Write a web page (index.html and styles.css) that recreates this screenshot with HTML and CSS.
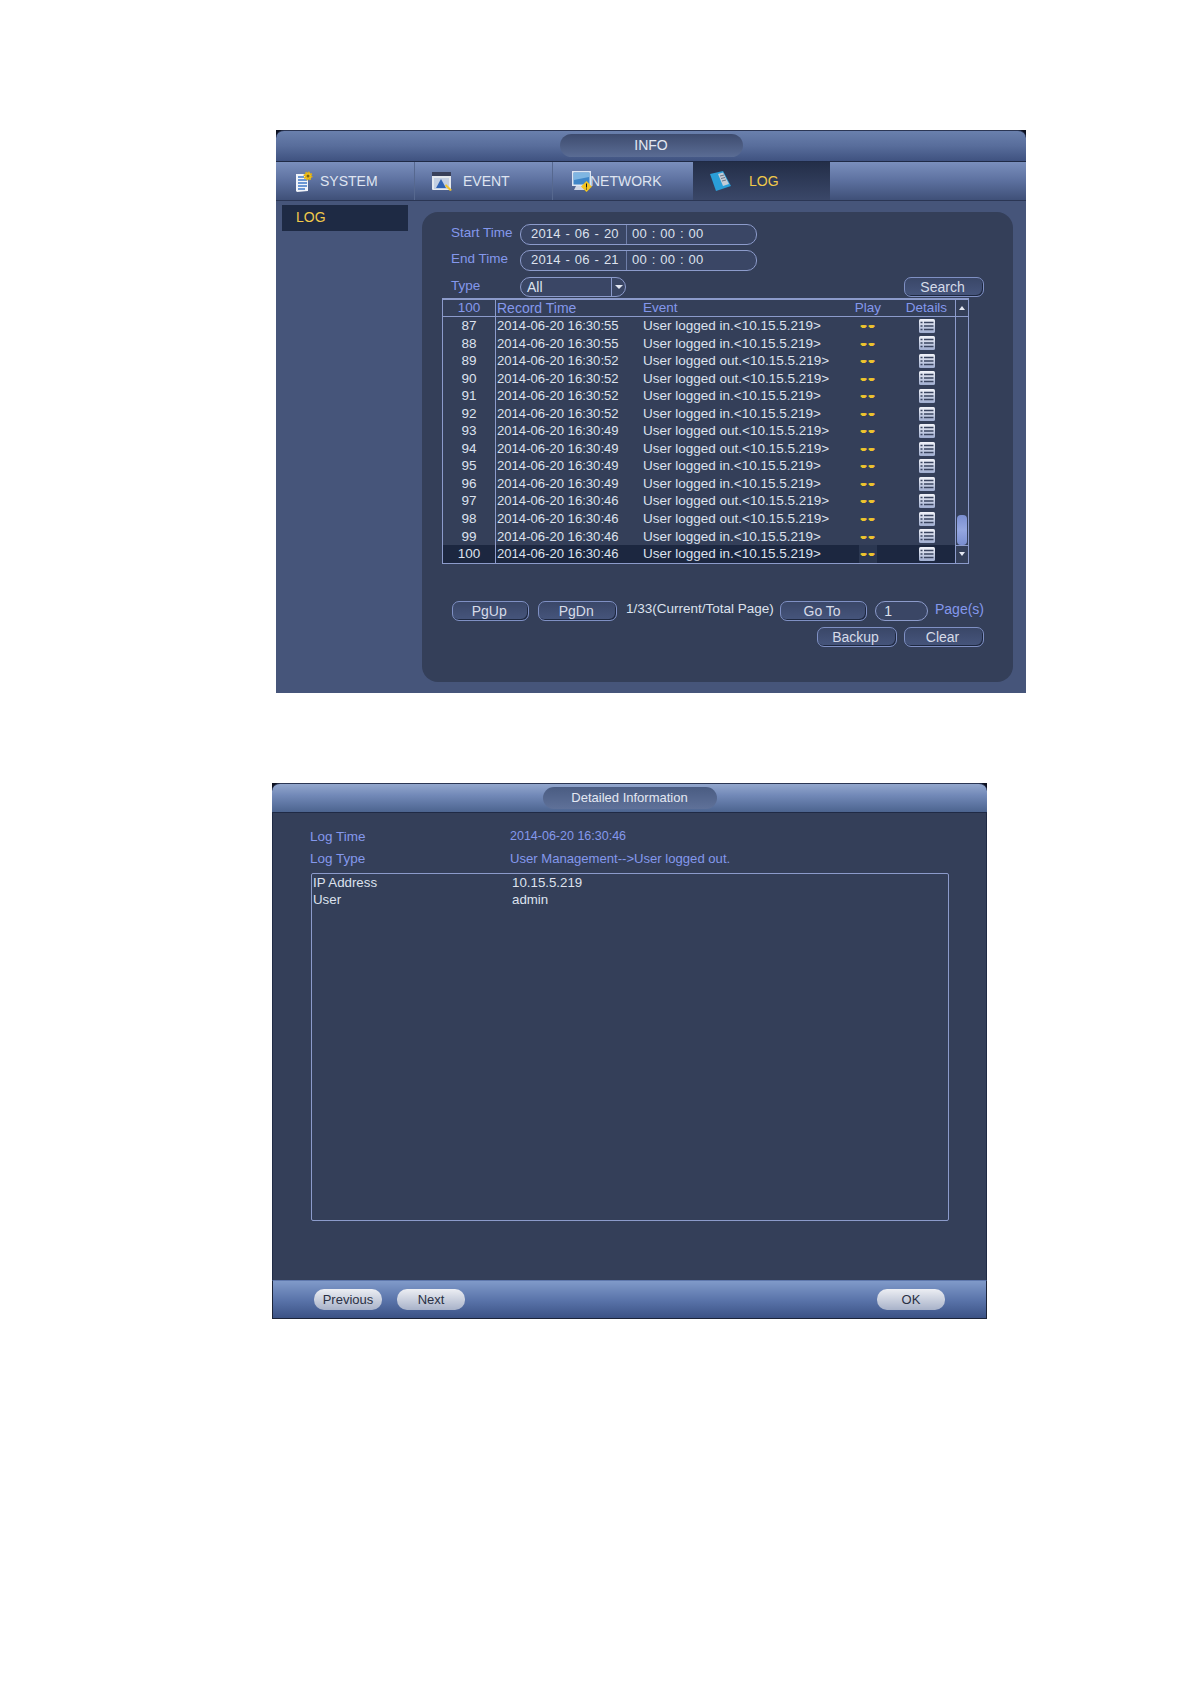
FILE: index.html

```html
<!DOCTYPE html>
<html>
<head>
    <title>Log</title>
    <meta http-equiv="Content-Type" content="text/html;charset=UTF-8"/>
    <link rel="stylesheet" href="styles.css">
</head>
<body>
<svg class="defs" width="0" height="0">
    <defs>
        <linearGradient id="detailFill" x1="0" y1="0" x2="0" y2="1">
            <stop offset="0" stop-color="#f2f4fa"/>
            <stop offset="1" stop-color="#9fadd0"/>
        </linearGradient>
        <symbol id="detailIcon" viewBox="0 0 16 14">
            <rect x="0" y="0" width="16" height="14" rx="1.5" fill="url(#detailFill)"/>
            <path d="M1.500 3.500H3.500M5 3.500H14.500M1.500 7H3.500M5 7H14.500M1.500 10.500H3.500M5 10.500H14.500" stroke="#3a4560" stroke-width="1.6" fill="none"/>
        </symbol>
    </defs>
</svg>

<div class="window info-window">
    <div class="title-bar">
        <div class="title-pill">INFO</div>
    </div>
    <div class="tabs">
        <div class="tab tab-system">
            <svg class="tab-icon" width="17" height="21" viewBox="0 0 17 21">
                <path d="M0 3H12V20L1 21L0 20Z" fill="#f1f4fa"/>
                <path d="M2 6H8M2 9H11M2 12H11M2 15H11M2 18H9" stroke="#3f78c8" stroke-width="1.3" fill="none"/>
                <circle cx="12" cy="5" r="3.500" fill="#f0c020" stroke="#e0b010" stroke-width="2" stroke-dasharray="1.500 1.200"/>
                <circle cx="12" cy="5" r="1.500" fill="#7a6418"/>
            </svg>
            <span>SYSTEM</span>
        </div>
        <div class="tab tab-event">
            <svg class="tab-icon" width="21" height="19" viewBox="0 0 21 19">
                <rect x="0" y="0" width="19" height="18" rx="1" fill="#e4e8ee"/>
                <path d="M0 0H19V4H0Z" fill="#39405a"/>
                <path d="M2 6H17V17H2Z" fill="#c3cfe2"/>
                <path d="M9 7L14 16H4Z" fill="#2f62b4"/>
                <path d="M14 12L20 18L18 19L13 14Z" fill="#f0c430"/>
            </svg>
            <span>EVENT</span>
        </div>
        <div class="tab tab-network">
            <svg class="tab-icon" width="20" height="21" viewBox="0 0 20 21">
                <rect x="0" y="0" width="19" height="15" fill="#dfe6f2"/>
                <rect x="1.500" y="1.500" width="16" height="12" fill="#3f86c8"/>
                <path d="M2 2H17V6L2 9Z" fill="#7fb6e2"/>
                <path d="M4 15H14L16 19H2Z" fill="#cfd6e4"/>
                <path d="M14.500 10L20 15.500L14.500 21L9 15.500Z" fill="#f2c420"/>
                <path d="M14 12.500H15V16.500H14ZM14 17.500H15V18.500H14Z" fill="#1a1a1a"/>
            </svg>
            <span>NETWORK</span>
        </div>
        <div class="tab tab-log active">
            <svg class="tab-icon" width="21" height="20" viewBox="0 0 21 20">
                <path d="M0 3L13 0L21 15L6 20Z" fill="#2a9ed8"/>
                <path d="M8 3L13 1.500L19 13L13 15Z" fill="#c4ccd6"/>
                <path d="M10 5L14 4M11 7.500L15 6.500M12 10L16 9" stroke="#6d7686" stroke-width="1"/>
            </svg>
            <span>LOG</span>
        </div>
        <div class="tab tab-rest"></div>
    </div>
    <div class="info-body">
        <div class="side-menu">
            <div class="side-item">LOG</div>
        </div>
        <div class="panel">
            <div class="form-row">
                <label class="label">Start Time</label>
                <div class="field date-field">
                    <span class="date-part">2014 - 06 - 20</span>
                    <span class="time-part">00 : 00 : 00</span>
                </div>
            </div>
            <div class="form-row">
                <label class="label">End Time</label>
                <div class="field date-field">
                    <span class="date-part">2014 - 06 - 21</span>
                    <span class="time-part">00 : 00 : 00</span>
                </div>
            </div>
            <div class="form-row type-row">
                <label class="label">Type</label>
                <div class="field type-field">
                    <span class="type-value">All</span>
                    <span class="type-arrow"></span>
                </div>
                <button class="btn search-btn">Search</button>
            </div>

            <div class="log-table">
                <div class="log-list">
                    <div class="log-row log-head">
                        <div class="c-no">100</div>
                        <div class="c-time">Record Time</div>
                        <div class="c-event">Event</div>
                        <div class="c-play">Play</div>
                        <div class="c-detail">Details</div>
                    </div>
                    <div class="log-row"><div class="c-no">87</div><div class="c-time">2014-06-20 16:30:55</div><div class="c-event">User logged in.&lt;10.15.5.219&gt;</div><div class="c-play"><span class="dash">--</span></div><div class="c-detail"><svg class="detail-icon"><use href="#detailIcon"/></svg></div></div>
                    <div class="log-row"><div class="c-no">88</div><div class="c-time">2014-06-20 16:30:55</div><div class="c-event">User logged in.&lt;10.15.5.219&gt;</div><div class="c-play"><span class="dash">--</span></div><div class="c-detail"><svg class="detail-icon"><use href="#detailIcon"/></svg></div></div>
                    <div class="log-row"><div class="c-no">89</div><div class="c-time">2014-06-20 16:30:52</div><div class="c-event">User logged out.&lt;10.15.5.219&gt;</div><div class="c-play"><span class="dash">--</span></div><div class="c-detail"><svg class="detail-icon"><use href="#detailIcon"/></svg></div></div>
                    <div class="log-row"><div class="c-no">90</div><div class="c-time">2014-06-20 16:30:52</div><div class="c-event">User logged out.&lt;10.15.5.219&gt;</div><div class="c-play"><span class="dash">--</span></div><div class="c-detail"><svg class="detail-icon"><use href="#detailIcon"/></svg></div></div>
                    <div class="log-row"><div class="c-no">91</div><div class="c-time">2014-06-20 16:30:52</div><div class="c-event">User logged in.&lt;10.15.5.219&gt;</div><div class="c-play"><span class="dash">--</span></div><div class="c-detail"><svg class="detail-icon"><use href="#detailIcon"/></svg></div></div>
                    <div class="log-row"><div class="c-no">92</div><div class="c-time">2014-06-20 16:30:52</div><div class="c-event">User logged in.&lt;10.15.5.219&gt;</div><div class="c-play"><span class="dash">--</span></div><div class="c-detail"><svg class="detail-icon"><use href="#detailIcon"/></svg></div></div>
                    <div class="log-row"><div class="c-no">93</div><div class="c-time">2014-06-20 16:30:49</div><div class="c-event">User logged out.&lt;10.15.5.219&gt;</div><div class="c-play"><span class="dash">--</span></div><div class="c-detail"><svg class="detail-icon"><use href="#detailIcon"/></svg></div></div>
                    <div class="log-row"><div class="c-no">94</div><div class="c-time">2014-06-20 16:30:49</div><div class="c-event">User logged out.&lt;10.15.5.219&gt;</div><div class="c-play"><span class="dash">--</span></div><div class="c-detail"><svg class="detail-icon"><use href="#detailIcon"/></svg></div></div>
                    <div class="log-row"><div class="c-no">95</div><div class="c-time">2014-06-20 16:30:49</div><div class="c-event">User logged in.&lt;10.15.5.219&gt;</div><div class="c-play"><span class="dash">--</span></div><div class="c-detail"><svg class="detail-icon"><use href="#detailIcon"/></svg></div></div>
                    <div class="log-row"><div class="c-no">96</div><div class="c-time">2014-06-20 16:30:49</div><div class="c-event">User logged in.&lt;10.15.5.219&gt;</div><div class="c-play"><span class="dash">--</span></div><div class="c-detail"><svg class="detail-icon"><use href="#detailIcon"/></svg></div></div>
                    <div class="log-row"><div class="c-no">97</div><div class="c-time">2014-06-20 16:30:46</div><div class="c-event">User logged out.&lt;10.15.5.219&gt;</div><div class="c-play"><span class="dash">--</span></div><div class="c-detail"><svg class="detail-icon"><use href="#detailIcon"/></svg></div></div>
                    <div class="log-row"><div class="c-no">98</div><div class="c-time">2014-06-20 16:30:46</div><div class="c-event">User logged out.&lt;10.15.5.219&gt;</div><div class="c-play"><span class="dash">--</span></div><div class="c-detail"><svg class="detail-icon"><use href="#detailIcon"/></svg></div></div>
                    <div class="log-row"><div class="c-no">99</div><div class="c-time">2014-06-20 16:30:46</div><div class="c-event">User logged in.&lt;10.15.5.219&gt;</div><div class="c-play"><span class="dash">--</span></div><div class="c-detail"><svg class="detail-icon"><use href="#detailIcon"/></svg></div></div>
                    <div class="log-row selected"><div class="c-no">100</div><div class="c-time">2014-06-20 16:30:46</div><div class="c-event">User logged in.&lt;10.15.5.219&gt;</div><div class="c-play"><span class="dash">--</span></div><div class="c-detail"><svg class="detail-icon"><use href="#detailIcon"/></svg></div></div>
                </div>
                <div class="scrollbar">
                    <div class="scroll-btn scroll-up"><span class="arrow-up"></span></div>
                    <div class="scroll-track"><div class="scroll-thumb"></div></div>
                    <div class="scroll-btn scroll-down"><span class="arrow-down"></span></div>
                </div>
            </div>

            <div class="pager-row">
                <button class="btn pg-up">PgUp</button>
                <button class="btn pg-dn">PgDn</button>
                <span class="page-info">1/33(Current/Total Page)</span>
                <button class="btn go-to">Go To</button>
                <div class="field page-field">1</div>
                <span class="label page-unit">Page(s)</span>
            </div>
            <div class="action-row">
                <button class="btn">Backup</button>
                <button class="btn">Clear</button>
            </div>
        </div>
    </div>
</div>

<div class="window detail-window">
    <div class="title-bar detail-title">
        <div class="title-pill detail-pill">Detailed Information</div>
    </div>
    <div class="detail-body">
        <div class="detail-row"><span class="label detail-key">Log Time</span><span class="label detail-time">2014-06-20 16:30:46</span></div>
        <div class="detail-row"><span class="label detail-key">Log Type</span><span class="label detail-type">User Management--&gt;User logged out.</span></div>
        <div class="detail-box">
            <div class="box-row"><span>IP Address</span><span>10.15.5.219</span></div>
            <div class="box-row"><span>User</span><span>admin</span></div>
        </div>
    </div>
    <div class="detail-foot">
        <button class="foot-btn">Previous</button>
        <button class="foot-btn">Next</button>
        <button class="foot-btn ok-btn">OK</button>
    </div>
</div>
</body>
</html>
```

FILE: styles.css

```css
* {
    box-sizing: border-box;
}

body {
    margin: 0;
    padding-top: 130px;
    height: 1684px;
    background-color: #fff;
    font-family: "Liberation Sans", Arial, sans-serif;
    font-size: 14px;
    color: #dde2ee;
}

.defs {
    position: absolute;
}

.window {
    background-color: #0c1020;
}

.info-window {
    width: 750px;
    height: 563px;
    margin-left: 276px;
}

.detail-window {
    width: 715px;
    height: 536px;
    margin-left: 272px;
    margin-top: 90px;
}

.title-bar {
    height: 32px;
    display: flex;
    justify-content: center;
    border-top: solid 1px #2b3654;
    border-bottom: solid 1px #1f2a45;
    border-radius: 8px 8px 0 0;
    background: linear-gradient(#6a80ad, #586d9b 50%, #3f5280);
}

.title-pill {
    width: 183px;
    height: 23px;
    margin-top: 3px;
    line-height: 23px;
    text-align: center;
    border-radius: 12px;
    color: #e4e8f2;
    background: linear-gradient(#3e4c6f, #5a6c94);
}

.tabs {
    display: flex;
    height: 39px;
    border-bottom: solid 1px #2b3654;
}

.tab {
    display: flex;
    align-items: center;
    height: 100%;
    padding-left: 17px;
    color: #dfe4f0;
    background: linear-gradient(#7a8fbc, #5f73a2 45%, #3f5078);
    border-right: solid 1px #56688f;
}

.tab-system {
    width: 139px;
    padding-left: 20px;
}

.tab-system .tab-icon {
    margin-right: 7px;
}

.tab-event {
    width: 138px;
}

.tab-event .tab-icon {
    margin-right: 10px;
}

.tab-network {
    width: 140px;
    padding-left: 19px;
    border-right: none;
}

.tab-network .tab-icon {
    margin-right: -2px;
}

.tab-log {
    width: 137px;
}

.tab-log .tab-icon {
    margin-right: 18px;
}

.tab-log.active {
    color: #f0c94a;
    border-right: none;
    background: linear-gradient(#232e48, #3a4768);
}

.tab-rest {
    flex: 1;
    padding: 0;
    border-right: none;
}

.info-body {
    display: flex;
    align-items: flex-start;
    height: 492px;
    background-color: #46557a;
}

.side-menu {
    width: 126px;
    margin: 4px 0 0 6px;
}

.side-item {
    height: 26px;
    line-height: 24px;
    padding-left: 14px;
    color: #f0c94a;
    background-color: #1e2a44;
}

.panel {
    width: 591px;
    height: 470px;
    margin: 11px 0 0 14px;
    padding: 12px 29px 0 20px;
    border-radius: 16px;
    background-color: #343f59;
}

.form-row {
    display: flex;
    align-items: center;
    height: 21px;
    margin-left: 9px;
    margin-bottom: 5px;
}

.type-row {
    height: 20px;
    margin-top: 6px;
    margin-bottom: 1px;
}

.label {
    color: #8498ec;
}

.form-row .label {
    width: 69px;
    margin-top: -4px;
    font-size: 13.5px;
}

.field {
    height: 100%;
    border: solid 1px #8c9bcb;
    border-radius: 10px;
    background-color: #3a4665;
    color: #dde2ee;
}

.date-field {
    display: flex;
    width: 237px;
    line-height: 18px;
    font-size: 13px;
    word-spacing: 1px;
    letter-spacing: 0.2px;
}

.date-part {
    width: 106px;
    padding-left: 10px;
    border-right: solid 1px #6f7ea8;
}

.time-part {
    padding-left: 5px;
}

.type-field {
    display: flex;
    width: 106px;
    line-height: 18px;
}

.type-value {
    flex: 1;
    padding-left: 6px;
}

.type-arrow {
    position: relative;
    width: 14px;
    border-left: solid 1px #8c9bcb;
}

.type-arrow:after {
    content: "";
    position: absolute;
    left: 3px;
    top: 7px;
    border: solid 4px transparent;
    border-top-color: #e4e8f2;
    border-bottom: none;
}

.btn {
    width: 80px;
    height: 20px;
    padding: 0 3px 0 0;
    border: solid 1px #7f90c4;
    border-radius: 7px;
    box-shadow: inset -1px -1px 0 #1e2840;
    font-family: inherit;
    font-size: 14px;
    line-height: 18px;
    color: #d6dbe8;
    background: linear-gradient(#3a4768, #46557c);
}

.search-btn {
    margin-left: auto;
}

.log-table {
    display: flex;
    width: 527px;
    border: solid 1px #8c9bcb;
    border-top-width: 2px;
}

.log-list {
    flex: 1;
}

.log-row {
    display: grid;
    grid-template-columns: 53px 147px 195px 60px 57px;
    align-items: center;
    height: 17.55px;
    line-height: 17.55px;
    font-size: 13.5px;
    white-space: nowrap;
}

.log-head {
    height: 17px;
    line-height: 16px;
    color: #8498ec;
    border-bottom: solid 1px #8c9bcb;
}

.c-no {
    height: 100%;
    text-align: center;
    border-right: solid 1px #8c9bcb;
}

.c-time {
    padding-left: 1px;
}

.log-row .c-time {
    font-size: 13.1px;
}

.log-head .c-time {
    font-size: 14px;
}

.c-play,
.c-detail {
    display: flex;
    justify-content: center;
    align-items: center;
    height: 100%;
}

.dash {
    display: block;
    width: 18px;
    height: 100%;
    padding-left: 2px;
    text-align: center;
    font-size: 15px;
    font-weight: bold;
    letter-spacing: 3px;
    line-height: 15px;
    color: #ecc42e;
    text-shadow: 1px 0 0 #ecc42e, -1px 0 0 #ecc42e, 0 1px 0 #ecc42e;
}

.detail-icon {
    width: 16px;
    height: 14px;
}

.selected {
    background-color: #1c2740;
}

.selected .dash {
    background-color: #2b3751;
}

.scrollbar {
    display: flex;
    flex-direction: column;
    width: 13px;
    border-left: solid 1px #8c9bcb;
}

.scroll-btn {
    display: flex;
    justify-content: center;
    align-items: center;
    height: 18px;
}

.scroll-up {
    height: 17px;
    border-bottom: solid 1px #8c9bcb;
}

.scroll-down {
    border-top: solid 1px #8c9bcb;
}

.arrow-up,
.arrow-down {
    border: solid 3.5px transparent;
}

.arrow-up {
    border-bottom: solid 4px #e4e8f2;
    border-top: none;
}

.arrow-down {
    border-top: solid 4px #e4e8f2;
    border-bottom: none;
}

.scroll-track {
    flex: 1;
    display: flex;
    flex-direction: column;
    justify-content: flex-end;
    padding: 0 1px;
}

.scroll-thumb {
    height: 30px;
    border-radius: 4px;
    background: linear-gradient(#7a8ed0, #94a6e0 50%, #7a8ed0);
}

.pager-row {
    display: flex;
    align-items: center;
    height: 20px;
    margin-top: 37px;
    margin-left: 10px;
}

.pg-up {
    width: 78px;
}

.pg-dn {
    width: 79px;
    margin-left: 9px;
}

.page-info {
    width: 155px;
    margin: -4px 0 0 9px;
    white-space: nowrap;
    font-size: 13.5px;
}

.go-to {
    width: 88px;
}

.page-field {
    width: 53px;
    margin-left: 8px;
    padding-left: 8px;
    line-height: 18px;
}

.page-unit {
    margin: -4px 0 0 7px;
}

.action-row {
    display: flex;
    justify-content: flex-end;
    gap: 7px;
    margin-top: 6px;
}

.detail-title {
    height: 30px;
    background: linear-gradient(#93a7cd, #7289b8 40%, #4c648f);
}

.detail-pill {
    width: 174px;
    height: 22px;
    margin-top: 3px;
    line-height: 22px;
    font-size: 13px;
    background: linear-gradient(#4a5c82, #5f7199);
}

.detail-body {
    height: 467px;
    padding: 12px 37px 0;
    background-color: #343f59;
    border-left: solid 1px #1f2a45;
    border-right: solid 1px #1f2a45;
}

.detail-row {
    display: flex;
    align-items: center;
    height: 22.5px;
    font-size: 13.5px;
}

.detail-key {
    width: 200px;
}

.detail-time {
    font-size: 12.5px;
}

.detail-type {
    font-size: 13.1px;
}

.detail-box {
    width: 638px;
    height: 348px;
    margin: 3px 0 0 1px;
    padding: 0 0 0 1px;
    border: solid 1px #8c9bcb;
    border-radius: 2px;
    font-size: 13.3px;
}

.box-row {
    display: grid;
    grid-template-columns: 199px 1fr;
    height: 17px;
    line-height: 17px;
}

.detail-foot {
    display: flex;
    align-items: center;
    gap: 15px;
    height: 39px;
    padding: 0 41px;
    border: solid 1px #1c2438;
    border-top-color: #5f78ad;
    background: linear-gradient(#809ac9, #5b75ab 50%, #3b5285);
}

.foot-btn {
    width: 68px;
    height: 21px;
    padding: 0;
    border: none;
    border-radius: 10px;
    font-family: inherit;
    font-size: 13px;
    color: #2a3044;
    background: linear-gradient(#eceef3, #a8b2c9);
}

.ok-btn {
    margin-left: auto;
}
```
